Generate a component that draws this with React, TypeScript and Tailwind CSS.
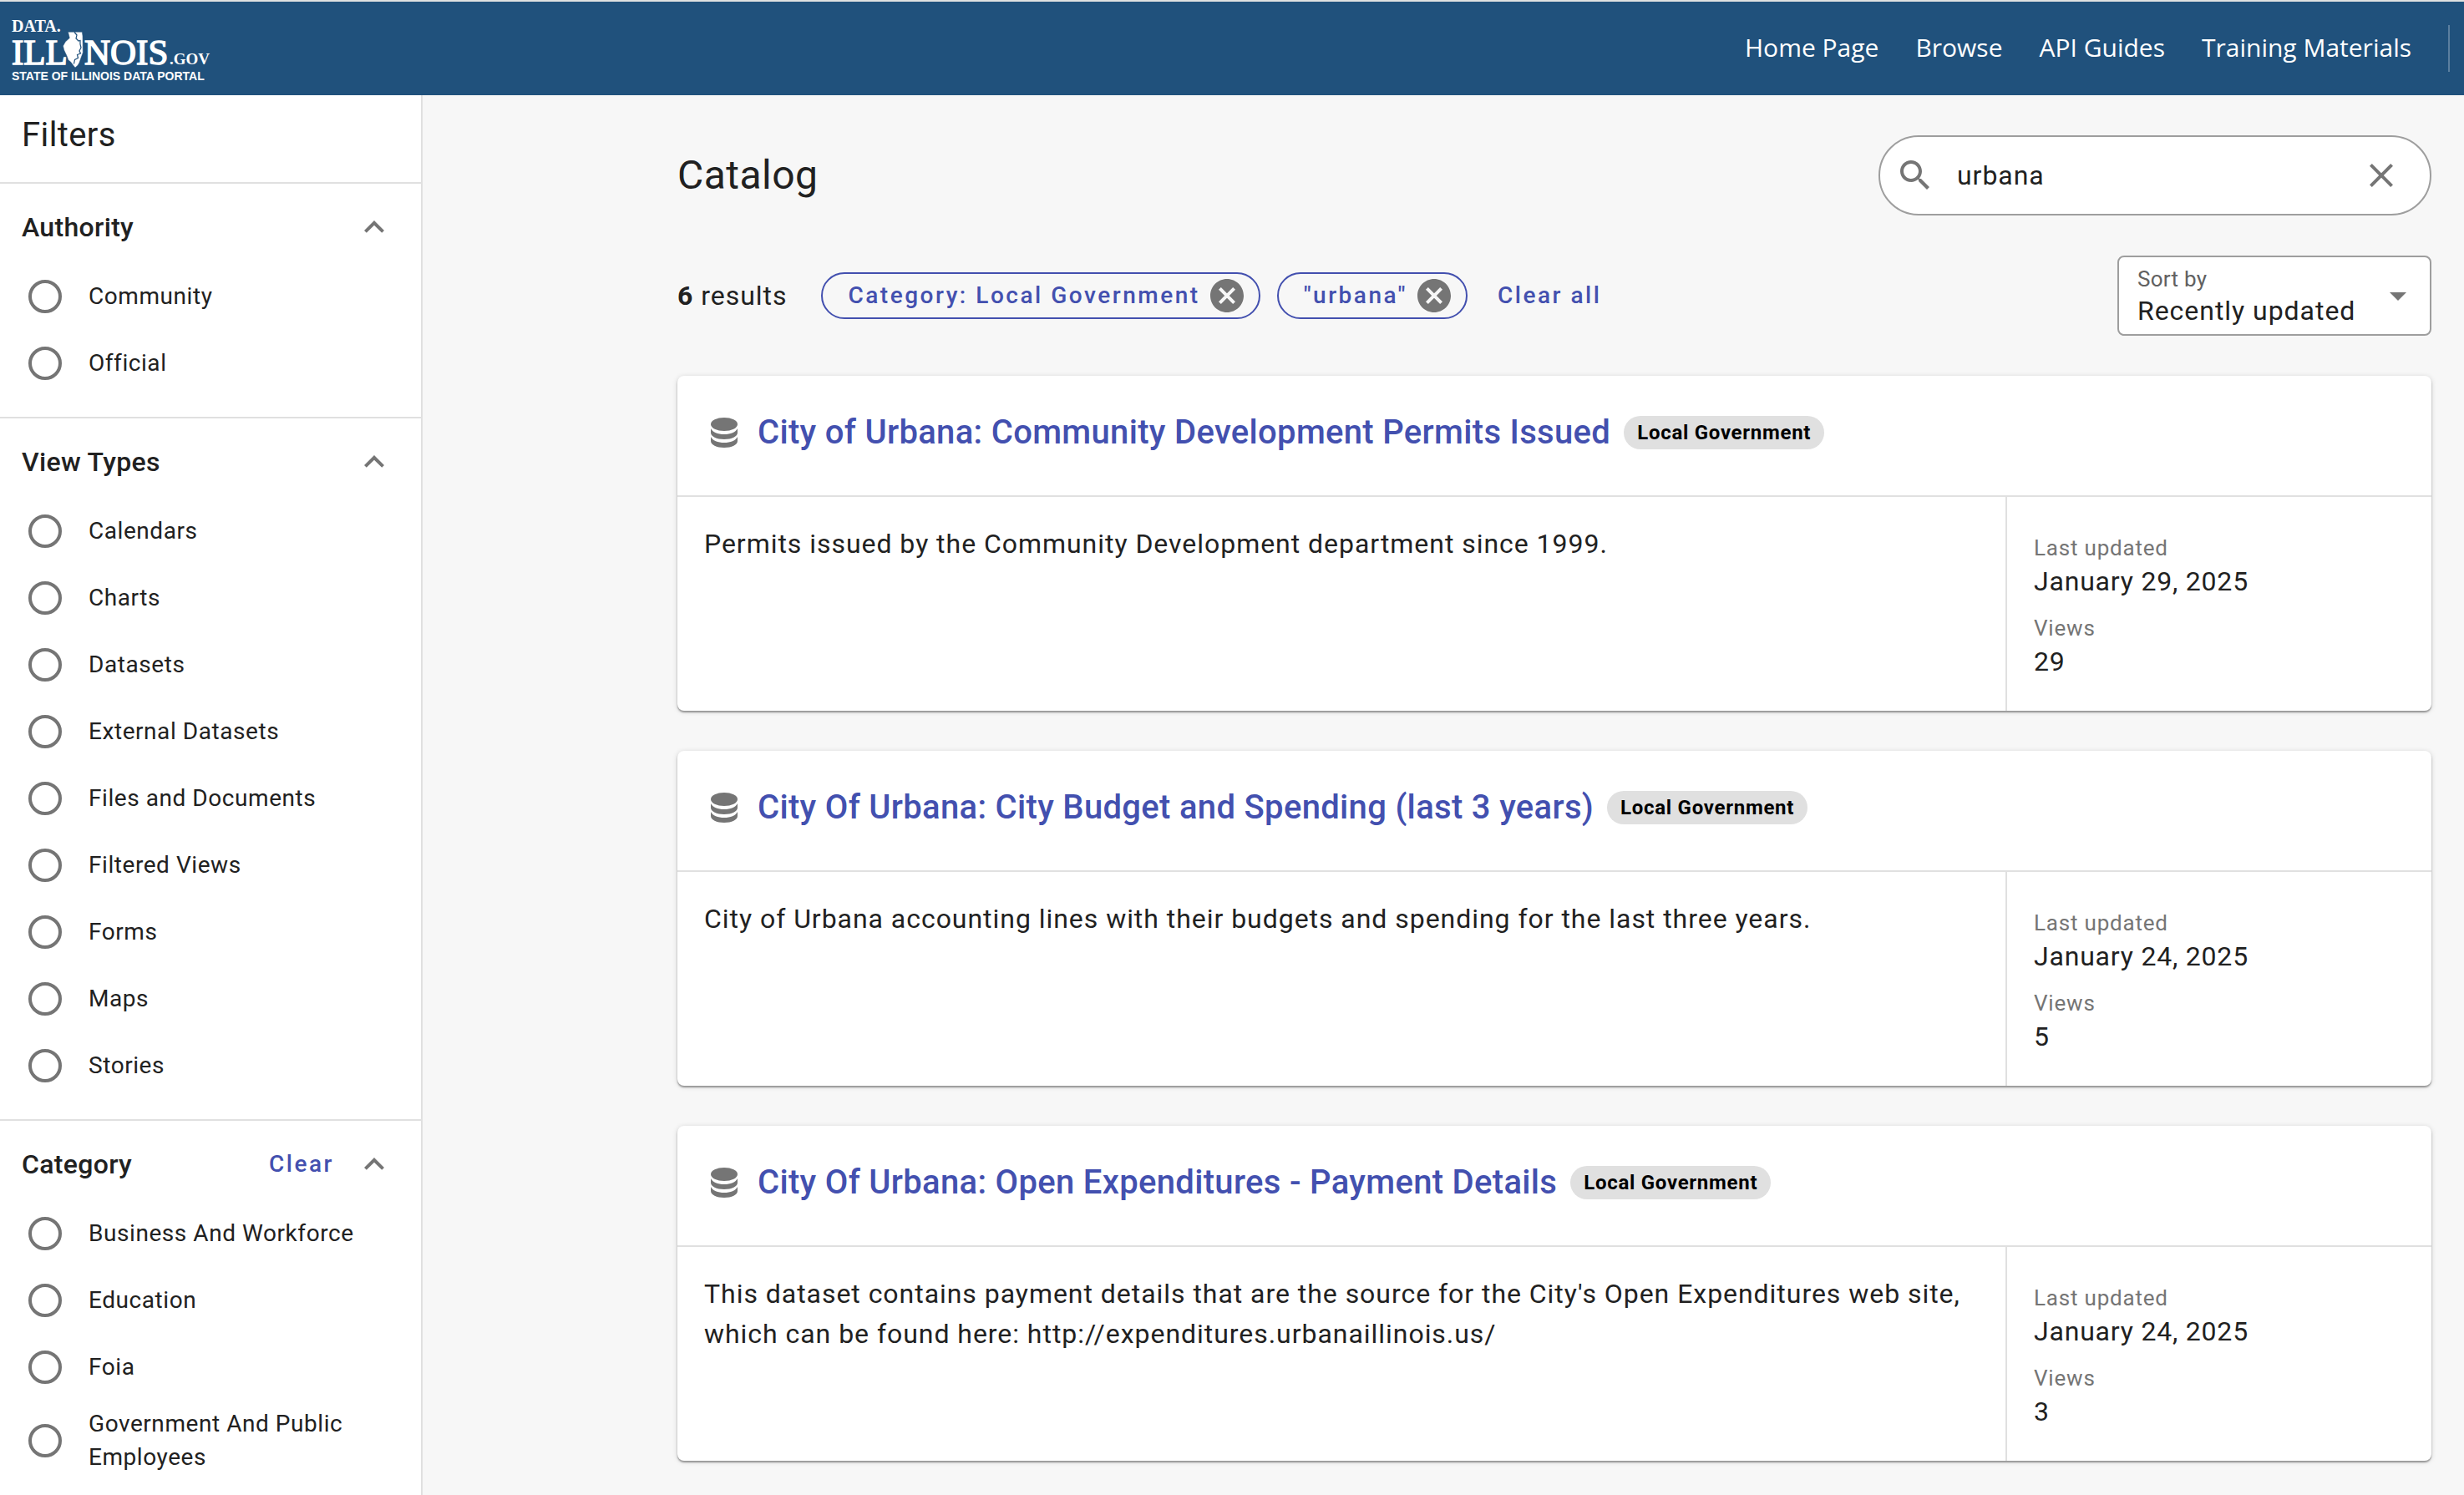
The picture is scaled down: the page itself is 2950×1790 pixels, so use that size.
import { useState } from "react";

const filterGroups = [
  { title: "Authority", clearable: false, options: ["Community", "Official"] },
  {
    title: "View Types",
    clearable: false,
    options: [
      "Calendars",
      "Charts",
      "Datasets",
      "External Datasets",
      "Files and Documents",
      "Filtered Views",
      "Forms",
      "Maps",
      "Stories",
    ],
  },
  {
    title: "Category",
    clearable: true,
    options: ["Business And Workforce", "Education", "Foia", "Government And Public Employees"],
  },
];

const results = [
  {
    title: "City of Urbana: Community Development Permits Issued",
    description: "Permits issued by the Community Development department since 1999.",
    updated: "January 29, 2025",
    views: 29,
  },
  {
    title: "City Of Urbana: City Budget and Spending (last 3 years)",
    description: "City of Urbana accounting lines with their budgets and spending for the last three years.",
    updated: "January 24, 2025",
    views: 5,
  },
  {
    title: "City Of Urbana: Open Expenditures - Payment Details",
    description:
      "This dataset contains payment details that are the source for the City's Open Expenditures web site, which can be found here: http://expenditures.urbanaillinois.us/",
    updated: "January 24, 2025",
    views: 3,
  },
];

const navLinks = ["Home Page", "Browse", "API Guides", "Training Materials"];

function ChevronUp() {
  return (
    <svg viewBox="0 0 24 24" className="size-12 fill-[#757575]" aria-hidden="true">
      <path d="M12 8l-6 6 1.41 1.41L12 10.83l4.59 4.58L18 14z" />
    </svg>
  );
}

function DatabaseIcon() {
  return (
    <svg viewBox="0 0 32 36" className="h-9 w-8 shrink-0 fill-[#757575]" aria-hidden="true">
      <ellipse cx="16" cy="8" rx="16" ry="8" />
      <path d="M0 13c2 4.500 8.500 7 16 7s14-2.500 16-7v5c0 4.500-7 8-16 8S0 22.500 0 18z" />
      <path d="M0 23c2 4.500 8.500 7 16 7s14-2.500 16-7v5c0 4.500-7 8-16 8S0 32.500 0 28z" />
    </svg>
  );
}

function CancelIcon() {
  return (
    <svg viewBox="2 2 20 20" className="size-10 fill-[#757575]" aria-hidden="true">
      <path d="M12 2C6.470 2 2 6.470 2 12s4.470 10 10 10 10-4.470 10-10S17.530 2 12 2zm5 13.590L15.590 17 12 13.410 8.410 17 7 15.590 10.590 12 7 8.410 8.410 7 12 10.590 15.590 7 17 8.410 13.410 12 17 15.590z" />
    </svg>
  );
}

function Logo() {
  return (
    <a href="#home" aria-label="Data.Illinois.gov, State of Illinois Data Portal" className="block">
      <svg viewBox="0 0 240 80" className="h-20 w-60 overflow-visible fill-white">
        <text x="0" y="20" fontFamily="Liberation Serif" fontWeight="700" fontSize="20">DATA.</text>
        <g className="stroke-white stroke-[1.5]">
          <text x="0" y="59" fontFamily="Liberation Serif" fontSize="43">ILL</text>
          <text x="87" y="59" fontFamily="Liberation Serif" fontSize="43">NOIS</text>
        </g>
        <path
          d="M67.500 20.300H84.300L85 25 85.300 45 82.700 52 81 57 79.300 60 76 63 73.500 60 71 56.500 67.700 53.700 66 49 62.700 42 61.500 37 64.300 32 69.300 27.500z"
          className="stroke-[#20517c] stroke-[0.5]"
        />
        <path
          d="M75 20.500l3 3.500-1 4 3 3 2-.5 0 4.500 1 4-2 4 1.500 3-4 1.500 1 4-4 2-1 5"
          className="fill-none stroke-[#20517c] stroke-[1.2]"
        />
        <text x="189" y="59" fontFamily="Liberation Serif" fontWeight="700" fontSize="19">.GOV</text>
        <text x="0" y="78" fontFamily="Liberation Sans" fontWeight="700" fontSize="14">STATE OF ILLINOIS DATA PORTAL</text>
      </svg>
    </a>
  );
}

function FilterGroup({ title, clearable, options }: { title: string; clearable: boolean; options: string[] }) {
  const [open, setOpen] = useState(true);
  return (
    <section className="border-b-2 border-[#e0e0e0] pt-6 pb-6">
      <div className="flex items-center pt-1 pr-8 pl-6.5">
        <h2 className="flex-1 text-[32px] leading-12 font-medium tracking-[0.01em]">{title}</h2>
        {clearable && (
          <button type="button" className="mr-6 text-[28px] leading-12 font-medium tracking-[0.09em] text-[#4350af]">
            Clear
          </button>
        )}
        <button type="button" aria-label={"Toggle " + title} aria-expanded={open} onClick={() => setOpen(!open)}>
          <ChevronUp />
        </button>
      </div>
      {open && (
        <div role="radiogroup" aria-label={title} className="pt-[19px]">
          {options.map((option) => (
            <label key={option} className="flex min-h-20 items-center gap-8 py-2 pr-8 pl-8.5 text-[28px] leading-10 tracking-[0.02em]">
              <input
                type="radio"
                name={title}
                className="size-10 shrink-0 appearance-none rounded-full border-4 border-[#757575] checked:border-[12px]"
              />
              {option}
            </label>
          ))}
        </div>
      )}
    </section>
  );
}

function Chip({ label }: { label: string }) {
  return (
    <span className="flex h-14 items-center gap-3 rounded-full border-2 border-[#4350af] pr-4.5 pl-7.5 text-[28px] font-medium tracking-[0.09em] text-[#4350af]">
      {label}
      <button type="button" aria-label={"Remove " + label}>
        <CancelIcon />
      </button>
    </span>
  );
}

function ResultCard({ title, description, updated, views }: (typeof results)[number]) {
  return (
    <article className="rounded-lg bg-white shadow-[0_2px_2px_rgba(0,0,0,0.35),0_1px_6px_rgba(0,0,0,0.15)]">
      <header className="flex items-center border-b-2 border-[#e0e0e0] px-10 pt-[38px] pb-[45px]">
        <DatabaseIcon />
        <h2 className="ml-6 text-[40px] leading-15 font-medium">
          <a href="#dataset" className="tracking-[0.008em] text-[#4350af]">{title}</a>
        </h2>
        <span className="ml-4 rounded-full bg-[#e0e0e0] px-4 text-[24px] leading-10 font-bold tracking-[0.03em] text-black">
          Local Government
        </span>
      </header>
      <div className="flex min-h-64">
        <p className="flex-1 px-8 py-8 text-[32px] leading-12 tracking-[0.03em]">{description}</p>
        <dl className="w-[510px] border-l-2 border-[#e0e0e0] px-8 pt-[41px] tracking-[0.05em]">
          <dt className="text-[26px] leading-10 text-[#757575]">Last updated</dt>
          <dd className="mb-4 text-[32px] leading-10">{updated}</dd>
          <dt className="text-[26px] leading-10 text-[#757575]">Views</dt>
          <dd className="text-[32px] leading-10">{views}</dd>
        </dl>
      </div>
    </article>
  );
}

export default function App() {
  const [query, setQuery] = useState("urbana");
  return (
    <div className="flex h-screen flex-col overflow-hidden bg-[#f7f7f7] font-['Roboto',sans-serif] text-[#212121]">
      <header className="flex h-[114px] shrink-0 items-center justify-between border-t-2 border-[#dfe1e1] bg-[#20517c] pr-[17px] pl-3.5">
        <Logo />
        <nav className="flex items-center gap-11 font-['Open_Sans',sans-serif] text-[30px] text-white">
          {navLinks.map((link) => (
            <a key={link} href="#nav" className="pb-1">{link}</a>
          ))}
          <span className="h-14 w-0.5 bg-[#5b7f9f]" />
        </nav>
      </header>
      <div className="flex min-h-0 flex-1">
        <aside className="w-[506px] shrink-0 overflow-hidden border-r-2 border-[#e0e0e0] bg-white">
          <h1 className="border-b-2 border-[#e0e0e0] pt-5 pb-7 pl-6.5 text-[40px] leading-14 tracking-[0.01em]">Filters</h1>
          {filterGroups.map((group) => (
            <FilterGroup key={group.title} {...group} />
          ))}
        </aside>
        <main className="min-w-0 flex-1 overflow-hidden pt-12 pr-[39px] pl-[305px]">
          <div className="flex items-center justify-between">
            <h1 className="text-[48px] leading-16 tracking-[0.01em]">Catalog</h1>
            <form className="flex h-24 w-[662px] items-center rounded-full border-2 border-[#9e9e9e] bg-white pr-8.5 pl-4.5">
              <svg viewBox="0 0 24 24" className="size-12 fill-[#757575]" aria-hidden="true">
                <path d="M15.500 14h-.79l-.28-.27C15.410 12.590 16 11.110 16 9.500 16 5.910 13.090 3 9.500 3S3 5.910 3 9.500 5.910 16 9.500 16c1.610 0 3.090-.59 4.230-1.570l.27.28v.79l5 4.990L20.490 19l-4.990-5zm-6 0C7.010 14 5 11.990 5 9.500S7.010 5 9.500 5 14 7.010 14 9.500 11.990 14 9.500 14z" />
              </svg>
              <input
                aria-label="Search catalog"
                value={query}
                onChange={(e) => setQuery(e.target.value)}
                className="min-w-0 flex-1 px-6.5 text-[32px] tracking-[0.03em] outline-none"
              />
              <button type="button" aria-label="Clear search" onClick={() => setQuery("")}>
                <svg viewBox="0 0 24 24" className="size-12 fill-[#757575]" aria-hidden="true">
                  <path d="M19 6.410L17.590 5 12 10.590 6.410 5 5 6.410 10.590 12 5 17.590 6.410 19 12 13.410 17.590 19 19 17.590 13.410 12z" />
                </svg>
              </button>
            </form>
          </div>
          <div className="my-12 flex items-center">
            <p className="mr-[41px] text-[32px] tracking-[0.03em]">
              <strong>6</strong> results
            </p>
            <div className="flex gap-5">
              <Chip label="Category: Local Government" />
              <Chip label={'"urbana"'} />
            </div>
            <button type="button" className="ml-9 text-[28px] font-medium tracking-[0.09em] text-[#4350af]">
              Clear all
            </button>
            <div className="relative ml-auto h-24 w-[376px] rounded-lg border-2 border-[#9e9e9e] bg-white">
              <label htmlFor="sort" className="pointer-events-none absolute top-2 left-5.5 text-[26px] leading-9 tracking-[0.01em] text-[#616161]">
                Sort by
              </label>
              <select id="sort" className="size-full appearance-none pt-9 pl-5.5 text-[32px] tracking-[0.03em] outline-none">
                <option>Recently updated</option>
                <option>Most viewed</option>
                <option>Alphabetical</option>
              </select>
              <svg viewBox="0 0 20 10" className="pointer-events-none absolute top-10.5 right-7 h-2.5 w-5 fill-[#757575]" aria-hidden="true">
                <path d="M0 0h20L10 10z" />
              </svg>
            </div>
          </div>
          <div className="flex flex-col gap-12">
            {results.map((result) => (
              <ResultCard key={result.title} {...result} />
            ))}
          </div>
        </main>
      </div>
    </div>
  );
}
